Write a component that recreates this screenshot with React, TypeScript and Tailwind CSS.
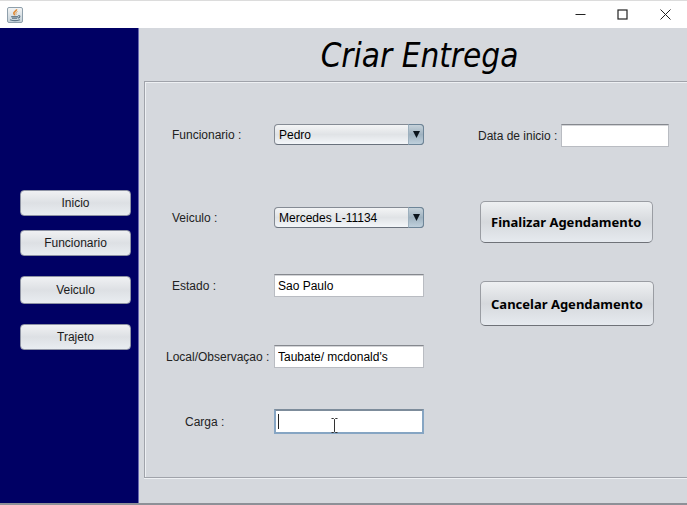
import React from "react";

const labelFont = "font-['Liberation_Sans',Arial,sans-serif] text-[12px] leading-4";
const fieldBox =
  "w-full border border-[#b9bcc2] border-t-[#85888e] bg-white pl-[3px] text-black outline-none shadow-[inset_0_1px_0_#d3d4d7]";

function JavaIcon() {
  return (
    <svg width="16" height="16" viewBox="0 0 16 16" fill="none" aria-hidden="true">
      <defs>
        <linearGradient id="cup-tile" x1="0" y1="0" x2="0" y2="1">
          <stop offset="0" stopColor="#f4f5f5" />
          <stop offset="1" stopColor="#c3d0d8" />
        </linearGradient>
      </defs>
      <rect x="0.5" y="0.5" width="15" height="15" rx="1.5" fill="url(#cup-tile)" stroke="#8fa0ac" />
      <path d="M9.500 2.200C10 4 6.300 4.800 6.800 6.300C7 7 7.700 7.500 7.600 8.300" stroke="#e08a35" strokeWidth="1.600" />
      <path d="M10.500 4.500C8.700 5.300 8.600 6 9.200 7.600" stroke="#dda05c" />
      <path d="M4 9h7v1.500H4.500z" fill="#6b7f8e" />
      <path d="M5 11.200h5M11 8.800c2.600-.7 2.500 2-.2 2.300" stroke="#5a6f7e" strokeWidth="1.100" />
      <path d="M3 12.800c2.500.9 7.500.9 10-.1" stroke="#62798a" strokeWidth="1.200" />
    </svg>
  );
}

function TitleBar() {
  return (
    <header className="flex h-7 shrink-0 items-center border-t border-[#dcdcdc] bg-white pl-[7px]">
      <JavaIcon />
      <div className="ml-auto flex h-full text-[#222]">
        <button type="button" aria-label="Minimizar" className="flex w-[42px] items-center justify-center">
          <svg width="11" height="11" viewBox="0 0 11 11" stroke="currentColor">
            <path d="M0.500 5.500h10" />
          </svg>
        </button>
        <button type="button" aria-label="Maximizar" className="flex w-[43px] items-center justify-center">
          <svg width="11" height="11" viewBox="0 0 11 11" fill="none" stroke="currentColor">
            <rect x="1" y="1" width="9" height="9" strokeWidth="1.200" />
          </svg>
        </button>
        <button type="button" aria-label="Fechar" className="flex w-[43px] items-center justify-center">
          <svg width="11" height="11" viewBox="0 0 11 11" stroke="currentColor">
            <path d="M0.500 0.500l10 10M10.500 0.500l-10 10" />
          </svg>
        </button>
      </div>
    </header>
  );
}

function NavButton({ children, className }: { children: string; className: string }) {
  return (
    <button
      type="button"
      className={`${labelFont} w-full rounded-[4px] border border-[#8e93a4] bg-linear-to-b from-[#f0f1f3] via-[#dde0e4] to-[#e9edf1] text-[#1a1a1a] ${className}`}
    >
      {children}
    </button>
  );
}

function Sidebar() {
  return (
    <nav className="flex w-[139px] shrink-0 flex-col border-r border-[#6868b0] bg-[#000064] pt-[162px] pr-[7px] pl-5">
      <NavButton className="h-[26px]">Inicio</NavButton>
      <NavButton className="mt-[14px] h-[26px]">Funcionario</NavButton>
      <NavButton className="mt-5 h-7">Veiculo</NavButton>
      <NavButton className="mt-5 h-[26px]">Trajeto</NavButton>
    </nav>
  );
}

function Field({
  id,
  label,
  className,
  indent = "pl-[26px]",
  children,
}: {
  id: string;
  label: string;
  className: string;
  indent?: string;
  children: React.ReactNode;
}) {
  return (
    <div className={`flex items-center ${className}`}>
      <label htmlFor={id} className={`${labelFont} w-32 shrink-0 whitespace-nowrap text-[#222] ${indent}`}>
        {label}
      </label>
      <div className="flex h-full w-[150px]">{children}</div>
    </div>
  );
}

function Combo({ id, value }: { id: string; value: string }) {
  return (
    <div className="relative flex h-full w-full">
      <select
        id={id}
        defaultValue={value}
        className={`${labelFont} block h-full w-full appearance-none rounded-[4px] border border-[#858b94] border-b-[#69717c] bg-linear-to-b from-[#f4f5f6] via-[#e0e3e6] to-[#f3f6f9] pl-1 text-black outline-none`}
      >
        <option>{value}</option>
      </select>
      <span className="pointer-events-none absolute inset-y-0 right-0 flex w-4 items-center justify-center rounded-r-[4px] border border-[#6d8598] border-l-[#9db0be] bg-linear-to-b from-[#c6d2da] via-[#9fb2c0] to-[#bfd0dc]">
        <svg width="7" height="7" viewBox="0 0 7 7" fill="#0b141c" aria-hidden="true">
          <path d="M0 0h7L3.500 7z" />
        </svg>
      </span>
    </div>
  );
}

function ActionButton({ children, className }: { children: string; className: string }) {
  return (
    <button
      type="button"
      className={`rounded-[5px] border border-[#9a9da3] border-b-[#6f7278] bg-linear-to-b from-[#eef0f2] via-[#d6d9dd] to-[#e6eaef] px-[10px] font-['Noto_Sans',sans-serif] text-[13px] leading-5 font-bold whitespace-nowrap text-black ${className}`}
    >
      {children}
    </button>
  );
}

function TextCursor() {
  return (
    <svg
      width="7"
      height="15"
      viewBox="0 0 7 15"
      fill="none"
      stroke="#333"
      className="pointer-events-none absolute top-[9px] left-[57px]"
      aria-hidden="true"
    >
      <path d="M0.500 0.500h2l1 1 1-1h2M3.500 1.500v12M0.500 14.500h2l1-1 1 1h2" />
    </svg>
  );
}

export default function App() {
  return (
    <div className="flex h-screen min-h-[505px] flex-col border-b-2 border-[#8d9097] bg-[#d5d8dd]">
      <TitleBar />
      <div className="flex flex-1">
        <Sidebar />
        <main className="flex min-w-0 flex-1 flex-col pb-[25px] pl-[5px]">
          <h1 className="h-[53px] pl-2 text-center font-['DejaVu_Sans_Condensed','DejaVu_Sans',sans-serif] text-[33px] leading-[56px] text-black italic">
            Criar Entrega
          </h1>
          <form className="flex flex-1 items-start border-y border-l border-[#a0a3aa] pt-[42px] pl-px shadow-[inset_1px_1px_0_#eef0f3,0_1px_0_#eef0f3]">
            <div className="flex w-[278px] shrink-0 flex-col">
              <Field id="funcionario" label="Funcionario :" className="h-[21px]">
                <Combo id="funcionario" value="Pedro" />
              </Field>
              <Field id="veiculo" label="Veiculo :" className="mt-[62px] h-[21px]">
                <Combo id="veiculo" value="Mercedes L-11134" />
              </Field>
              <Field id="estado" label="Estado :" className="mt-[46px] h-[23px]">
                <input id="estado" type="text" defaultValue="Sao Paulo" className={`${labelFont} ${fieldBox}`} />
              </Field>
              <Field id="local" label="Local/Observaçao :" indent="pl-5" className="mt-12 h-[23px]">
                <input id="local" type="text" defaultValue="Taubate/ mcdonald's" className={`${labelFont} ${fieldBox}`} />
              </Field>
              <Field id="carga" label="Carga :" indent="pl-[39px]" className="mt-[41px] h-[25px]">
                <div className="relative h-full w-full">
                  <input
                    id="carga"
                    type="text"
                    className={`${labelFont} block h-full w-full border-2 border-[#86a5c3] border-t-[#7d8c9b] bg-white pl-[3px] outline-none`}
                  />
                  <span className="pointer-events-none absolute top-[5px] left-1 h-[15px] w-px bg-[#222]" />
                  <TextCursor />
                </div>
              </Field>
            </div>
            <div className="ml-[54px] flex flex-1 flex-col items-start pr-[18px]">
              <div className="flex h-[23px] w-full items-center gap-1">
                <label htmlFor="data" className={`${labelFont} shrink-0 whitespace-nowrap text-[#222]`}>
                  Data de inicio :
                </label>
                <input id="data" type="text" className={`${labelFont} ${fieldBox} h-full min-w-0`} />
              </div>
              <ActionButton className="mt-[54px] ml-[2px] h-[42px]">Finalizar Agendamento</ActionButton>
              <ActionButton className="mt-[38px] ml-[2px] h-[45px]">Cancelar Agendamento</ActionButton>
            </div>
          </form>
        </main>
      </div>
    </div>
  );
}
